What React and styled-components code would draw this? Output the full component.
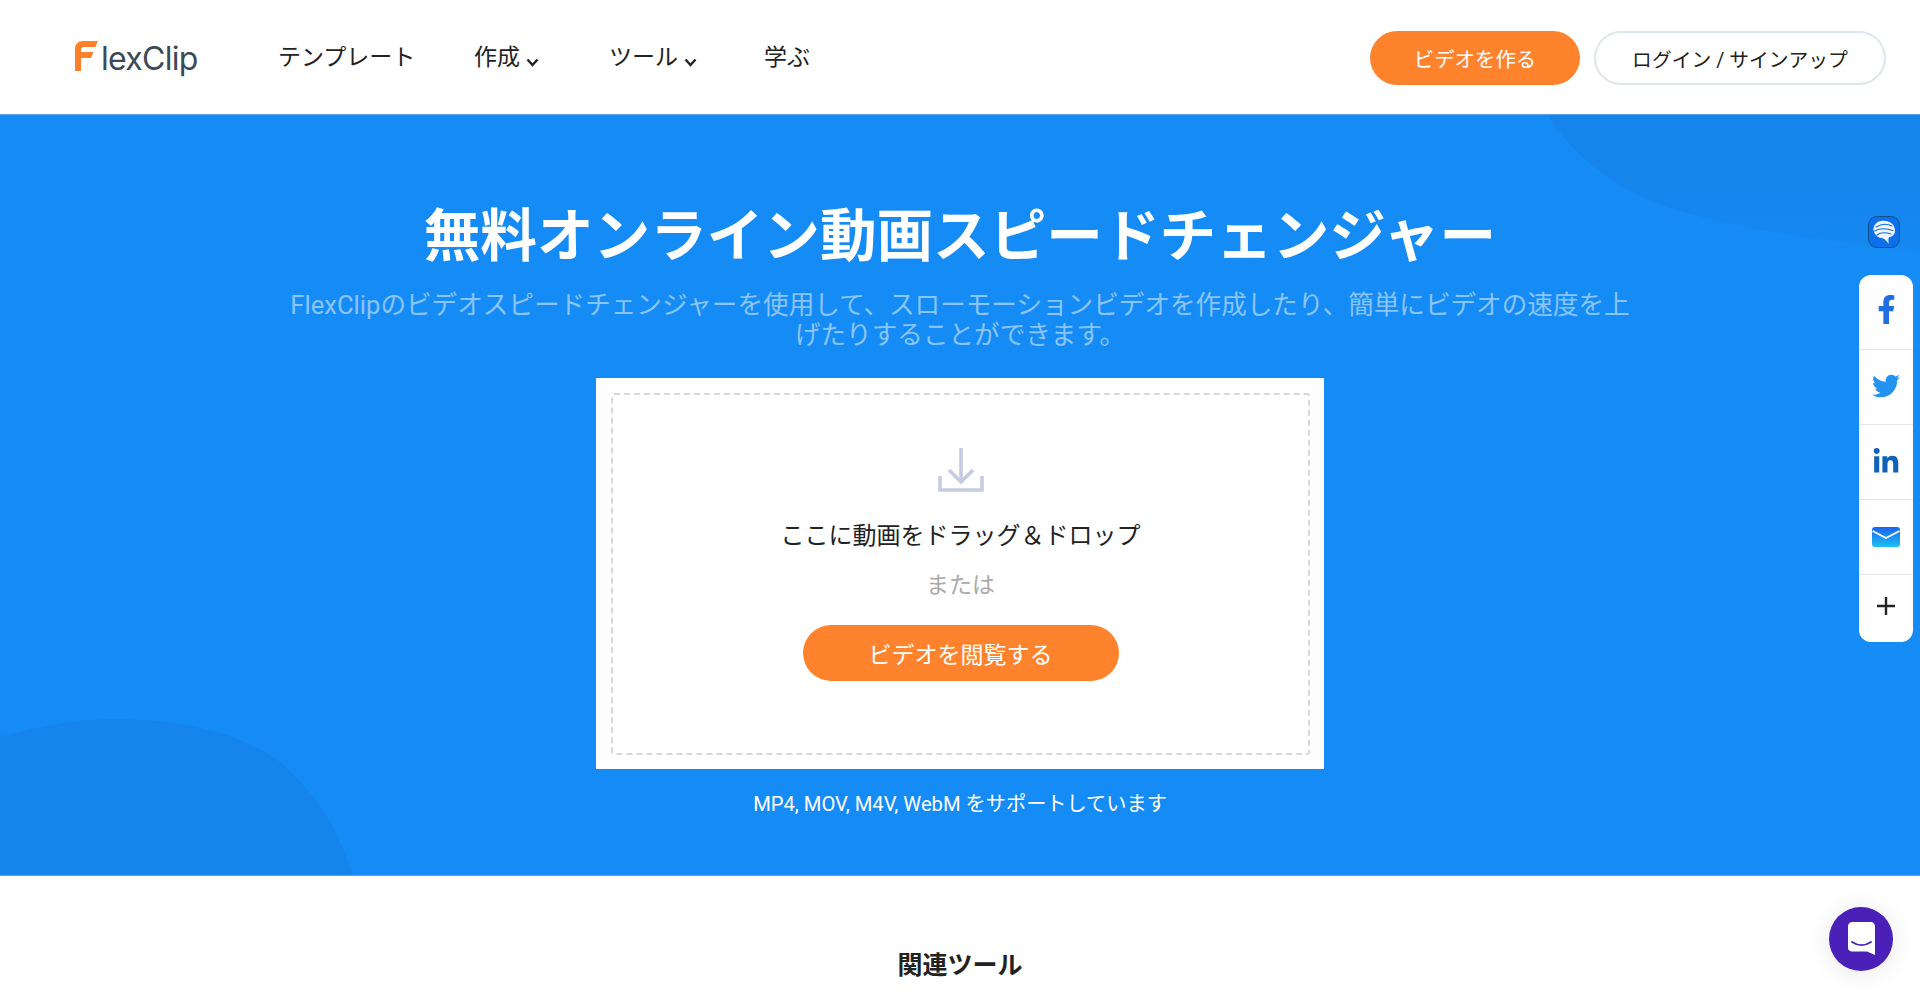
import React from 'react';
import styled, { createGlobalStyle } from 'styled-components';
import { FaFacebookF, FaTwitter, FaLinkedinIn } from 'react-icons/fa';

const FONT = 'Roboto, "Noto Sans CJK JP", sans-serif';

const GlobalStyle = createGlobalStyle`
  html, body {
    margin: 0;
    padding: 0;
    background: #fff;
    overflow: hidden;
    font-family: ${FONT};
  }
  * { box-sizing: border-box; }
`;

const Page = styled.div`
  position: relative;
  width: 1920px;
  height: 998px;
  overflow: hidden;
`;

// Header
const Header = styled.header`
  height: 114px;
  display: flex;
  align-items: center;
  padding: 2px 34px 0 75px;
  background: #fff;
`;

const Logo = styled.a`
  display: flex;
  align-items: flex-start;
  width: 203px;
  height: 40px;
  margin-top: 1px;
  color: #3a4a56;
  font-family: Inter, sans-serif;
  font-size: 32px;
  line-height: 40px;
  letter-spacing: -0.7px;
  font-weight: 400;
`;

const LogoMark = styled.svg`
  width: 23px;
  height: 30px;
  margin: 2px 3px 0 0;
  flex: none;
`;

const Nav = styled.nav`
  display: flex;
  align-items: center;
  flex: 1;
`;

const NavItem = styled.a`
  display: flex;
  align-items: center;
  width: ${(p) => p.$width}px;
  color: #222;
  font-size: 23px;
  line-height: 30px;
`;

const Caret = styled.svg`
  width: 13px;
  height: 9px;
  margin: 8px 0 0 6px;
`;

const Actions = styled.div`
  display: flex;
  gap: 14px;
`;

const PillButton = styled.button`
  height: ${(p) => p.$height}px;
  width: ${(p) => p.$width}px;
  border: 0;
  border-radius: 30px;
  background: #ff822c;
  color: #fff;
  font-family: ${FONT};
  font-size: ${(p) => p.$size}px;
  padding: 0;
`;

const GhostButton = styled.button`
  height: 54px;
  width: 292px;
  border: 2px solid #dfe5ec;
  border-radius: 30px;
  background: #fff;
  color: #222;
  font-family: ${FONT};
  font-size: 19.8px;
  padding: 0;
`;

// Hero
const Hero = styled.section`
  position: relative;
  height: 762px;
  display: flex;
  flex-direction: column;
  align-items: center;
  background: #158bf5;
  overflow: hidden;
  border-top: 1px solid #5ba6ea;
  border-bottom: 1px solid #5ba6ea;
`;

const Blob = styled.svg`
  position: absolute;
  ${(p) => p.$css}
`;

const Title = styled.h1`
  position: relative;
  margin: 84px 0 0;
  color: #fff;
  font-size: 56.6px;
  line-height: 76px;
  font-weight: 700;
  white-space: nowrap;
`;

const Subtitle = styled.p`
  position: relative;
  width: 1350px;
  margin: 15px 0 0;
  color: rgba(255, 255, 255, 0.5);
  font-size: 25.6px;
  line-height: 30px;
  text-align: center;
`;

const Card = styled.div`
  position: relative;
  width: 728px;
  height: 391px;
  margin-top: 28px;
  padding: 15px 14px 14px 15px;
  background: #fff;
`;

const DropZone = styled.div`
  height: 100%;
  display: flex;
  flex-direction: column;
  align-items: center;
  padding-top: 53px;
  border: 2px dashed #d8d8dc;
  border-radius: 3px;
`;

const UploadIcon = styled.svg`
  width: 46px;
  height: 44px;
`;

const DropText = styled.div`
  margin-top: 27px;
  color: #222;
  font-size: 24px;
  line-height: 34px;
`;

const OrText = styled.div`
  margin-top: 16px;
  color: #aaa;
  font-size: 23px;
  line-height: 34px;
`;

const BrowseSlot = styled.div`
  margin-top: 22px;
`;

const Support = styled.p`
  position: relative;
  margin: 21px 0 0;
  color: #fff;
  font-size: 20.2px;
  line-height: 28px;
`;

// Related tools
const Related = styled.section`
  display: flex;
  justify-content: center;
  padding-top: 72px;
`;

const RelatedTitle = styled.h2`
  margin: 0;
  color: #222;
  font-size: 25px;
  line-height: 36px;
  font-weight: 700;
`;

// Overlays
const BrainBadge = styled.div`
  position: absolute;
  left: 1868px;
  top: 216px;
  width: 32px;
  height: 32px;
  display: flex;
  align-items: center;
  justify-content: center;
  border: 1px solid #12508f;
  border-radius: 9px;
  background: #0b70ea;
`;

const ShareBar = styled.aside`
  position: absolute;
  left: 1859px;
  top: 275px;
  width: 54px;
  display: flex;
  flex-direction: column;
  border-radius: 12px;
  background: #fff;
`;

const ShareItem = styled.a`
  height: ${(p) => p.$height || 75}px;
  display: flex;
  align-items: center;
  justify-content: center;
  padding-bottom: ${(p) => p.$lift || 0}px;
  color: ${(p) => p.$color};
  font-size: ${(p) => p.$size || 28}px;
  border-bottom: ${(p) => (p.$last ? '0' : '1px solid #e4e6e9')};
`;

const ChatButton = styled.div`
  position: absolute;
  left: 1829px;
  top: 907px;
  width: 64px;
  height: 64px;
  display: flex;
  align-items: center;
  justify-content: center;
  border-radius: 50%;
  background: #4a20b8;
  box-shadow: 0 2px 24px rgba(0, 0, 0, 0.1);
`;

const ChevronDown = () => (
  <Caret viewBox="0 0 13 9" fill="none" stroke="#222" strokeWidth="2.4">
    <path d="M1.5 1.5 L6.5 7 L11.5 1.5" />
  </Caret>
);

export default function App() {
  return (
    <Page>
      <GlobalStyle />
      <Header>
        <Logo>
          <LogoMark viewBox="0 0 23 30">
            <path
              fill="#ff7f2a"
              d="M8 0 H23 L20.5 6 H9 C7 6 6 7 6 9 V11 H18.5 L16 17 H6 V30 H0 V8 C0 3 3 0 8 0 Z"
            />
          </LogoMark>
          lexClip
        </Logo>
        <Nav>
          <NavItem $width={196}>テンプレート</NavItem>
          <NavItem $width={135}>作成<ChevronDown /></NavItem>
          <NavItem $width={155}>ツール<ChevronDown /></NavItem>
          <NavItem $width={60}>学ぶ</NavItem>
        </Nav>
        <Actions>
          <PillButton $width={210} $height={54} $size={20.4}>ビデオを作る</PillButton>
          <GhostButton>ログイン / サインアップ</GhostButton>
        </Actions>
      </Header>

      <Hero>
        <Blob
          $css="left: 0; bottom: 0;"
          width="352"
          height="158"
          viewBox="0 0 352 158"
        >
          <path
            fill="#1585ec"
            d="M0 20 C35 10 70 3 110 2 C180 2 240 15 280 45 C320 80 342 120 352 158 H0 Z"
          />
        </Blob>
        <Blob
          $css="right: 0; top: 0;"
          width="373"
          height="140"
          viewBox="0 0 373 140"
        >
          <defs>
            <linearGradient id="blobFade" x1="0" y1="0" x2="0" y2="1">
              <stop offset="0" stopColor="#1585ec" />
              <stop offset="0.7" stopColor="#1586ed" />
              <stop offset="1" stopColor="#158af2" />
            </linearGradient>
          </defs>
          <path
            fill="url(#blobFade)"
            d="M0 0 H373 V138 C300 128 200 118 120 92 C70 75 25 40 0 0 Z"
          />
        </Blob>
        <Title>無料オンライン動画スピードチェンジャー</Title>
        <Subtitle>
          FlexClipのビデオスピードチェンジャーを使用して、スローモーションビデオを作成したり、簡単にビデオの速度を上げたりすることができます。
        </Subtitle>
        <Card>
          <DropZone>
            <UploadIcon viewBox="0 0 46 44" fill="none" stroke="#c5cbe2" strokeWidth="3.6">
              <path d="M23 0 V34" />
              <path d="M11 22 L23 34 L35 22" />
              <path d="M2 28 V42 H44 V28" />
            </UploadIcon>
            <DropText>ここに動画をドラッグ＆ドロップ</DropText>
            <OrText>または</OrText>
            <BrowseSlot>
              <PillButton $width={316} $height={56} $size={23}>ビデオを閲覧する</PillButton>
            </BrowseSlot>
          </DropZone>
        </Card>
        <Support>MP4, MOV, M4V, WebM をサポートしています</Support>
      </Hero>

      <Related>
        <RelatedTitle>関連ツール</RelatedTitle>
      </Related>

      <BrainBadge>
        <svg width="26" height="26" viewBox="0 0 26 26">
          <path
            fill="#f2f6fb"
            d="M3.5 14 C0.5 9 4 3 10 2 C17 0.5 24 4.5 24 11.5 C24 16 20.5 18 18 18.2 C17 20 17.5 22.5 17.8 25 C15.5 22 13.5 19.5 11 19 C8 19 5 17 3.5 14 Z"
          />
          <g fill="none" stroke="#0b70ea" strokeWidth="1.1" strokeLinecap="round">
            <path d="M5 8 C10 5 16 4.5 21 7" />
            <path d="M3.5 12 C9 9 15 9 22 11.5" />
            <path d="M6 16 C10 13 14 13 20 15" />
          </g>
        </svg>
      </BrainBadge>

      <ShareBar>
        <ShareItem $color="#1f6fe0" $size={29} $lift={5}><FaFacebookF /></ShareItem>
        <ShareItem $color="#2293ee" $size={28} $lift={3}><FaTwitter /></ShareItem>
        <ShareItem $color="#0f62b8" $size={28}><FaLinkedinIn /></ShareItem>
        <ShareItem $color="#2293ee">
          <svg width="28" height="20" viewBox="0 0 28 20">
            <defs>
              <linearGradient id="mailFill" x1="0" y1="0" x2="0" y2="1">
                <stop offset="0" stopColor="#1c63ee" />
                <stop offset="1" stopColor="#1cc0f2" />
              </linearGradient>
            </defs>
            <rect width="28" height="20" rx="3" fill="url(#mailFill)" />
            <path d="M0.5 4 L14 11 L27.5 4" fill="none" stroke="#fff" strokeWidth="1.8" />
          </svg>
        </ShareItem>
        <ShareItem $color="#222" $height={67} $lift={5} $last>
          <svg width="20" height="20" viewBox="0 0 20 20" stroke="#222" strokeWidth="2.4">
            <path d="M10 1 V19 M1 10 H19" />
          </svg>
        </ShareItem>
      </ShareBar>

      <ChatButton>
        <svg width="27" height="34" viewBox="0 0 27 34">
          <path
            fill="#fff"
            d="M4 0 H23 C25 0 27 2 27 4 V33 L19 29.5 H4 C2 29.5 0 28 0 26 V4 C0 2 2 0 4 0 Z"
          />
          <path d="M4 20 C10 24 17 24 23 20" fill="none" stroke="#4a20b8" strokeWidth="1.8" strokeLinecap="round" />
        </svg>
      </ChatButton>
    </Page>
  );
}
